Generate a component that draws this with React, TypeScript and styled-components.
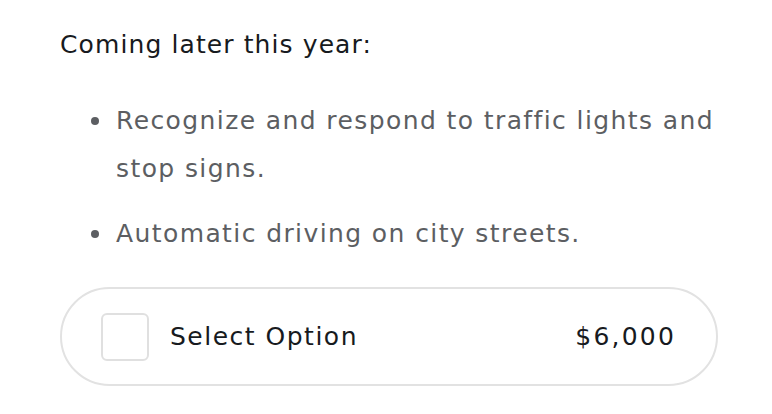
import styled, { createGlobalStyle } from 'styled-components';

const GlobalStyle = createGlobalStyle`
  html, body {
    margin: 0;
    padding: 0;
    background: #ffffff;
  }
  body {
    font-family: 'DejaVu Sans', 'Liberation Sans', sans-serif;
  }
`;

const features = [
  'Recognize and respond to traffic lights and stop signs.',
  'Automatic driving on city streets.',
];

function App() {
  return (
    <>
      <GlobalStyle />
      <Container>
        <Heading>Coming later this year:</Heading>
        <FeatureList>
          {features.map((text) => (
            <FeatureItem key={text}>{text}</FeatureItem>
          ))}
        </FeatureList>
        <OptionBox>
          <Checkbox />
          <OptionLabel>Select Option</OptionLabel>
          <Price>$6,000</Price>
        </OptionBox>
      </Container>
    </>
  );
}

export default App;

const Container = styled.div`
  width: 658px;
  padding: 28px 0 0 60px;
`;

const Heading = styled.h2`
  margin: 0;
  font-size: 25px;
  font-weight: 400;
  letter-spacing: 1.1px;
  line-height: 34px;
  color: #171a20;
`;

const FeatureList = styled.ul`
  margin: 35px 0 0 0;
  padding: 0 0 0 56px;
  width: 604px;
  list-style: none;
`;

const FeatureItem = styled.li`
  position: relative;
  margin-bottom: 17px;
  font-size: 25px;
  letter-spacing: 1.4px;
  line-height: 48px;
  color: #5c5e62;

  &::before {
    content: '';
    position: absolute;
    left: -25px;
    top: 20px;
    width: 8px;
    height: 8px;
    border-radius: 50%;
    background: #5c5e62;
  }
`;

const OptionBox = styled.div`
  margin-top: 29px;
  height: 95px;
  display: flex;
  align-items: center;
  padding: 0 40px 0 39px;
  border: 2px solid #e2e2e2;
  border-radius: 50px;
`;

const Checkbox = styled.div`
  width: 44px;
  height: 44px;
  border: 2px solid #e0e0e0;
  border-radius: 6px;
`;

const OptionLabel = styled.span`
  flex: 1;
  margin-left: 21px;
  font-size: 25px;
  letter-spacing: 1.5px;
  color: #171a20;
`;

const Price = styled.span`
  font-size: 25px;
  letter-spacing: 2.2px;
  color: #171a20;
`;
